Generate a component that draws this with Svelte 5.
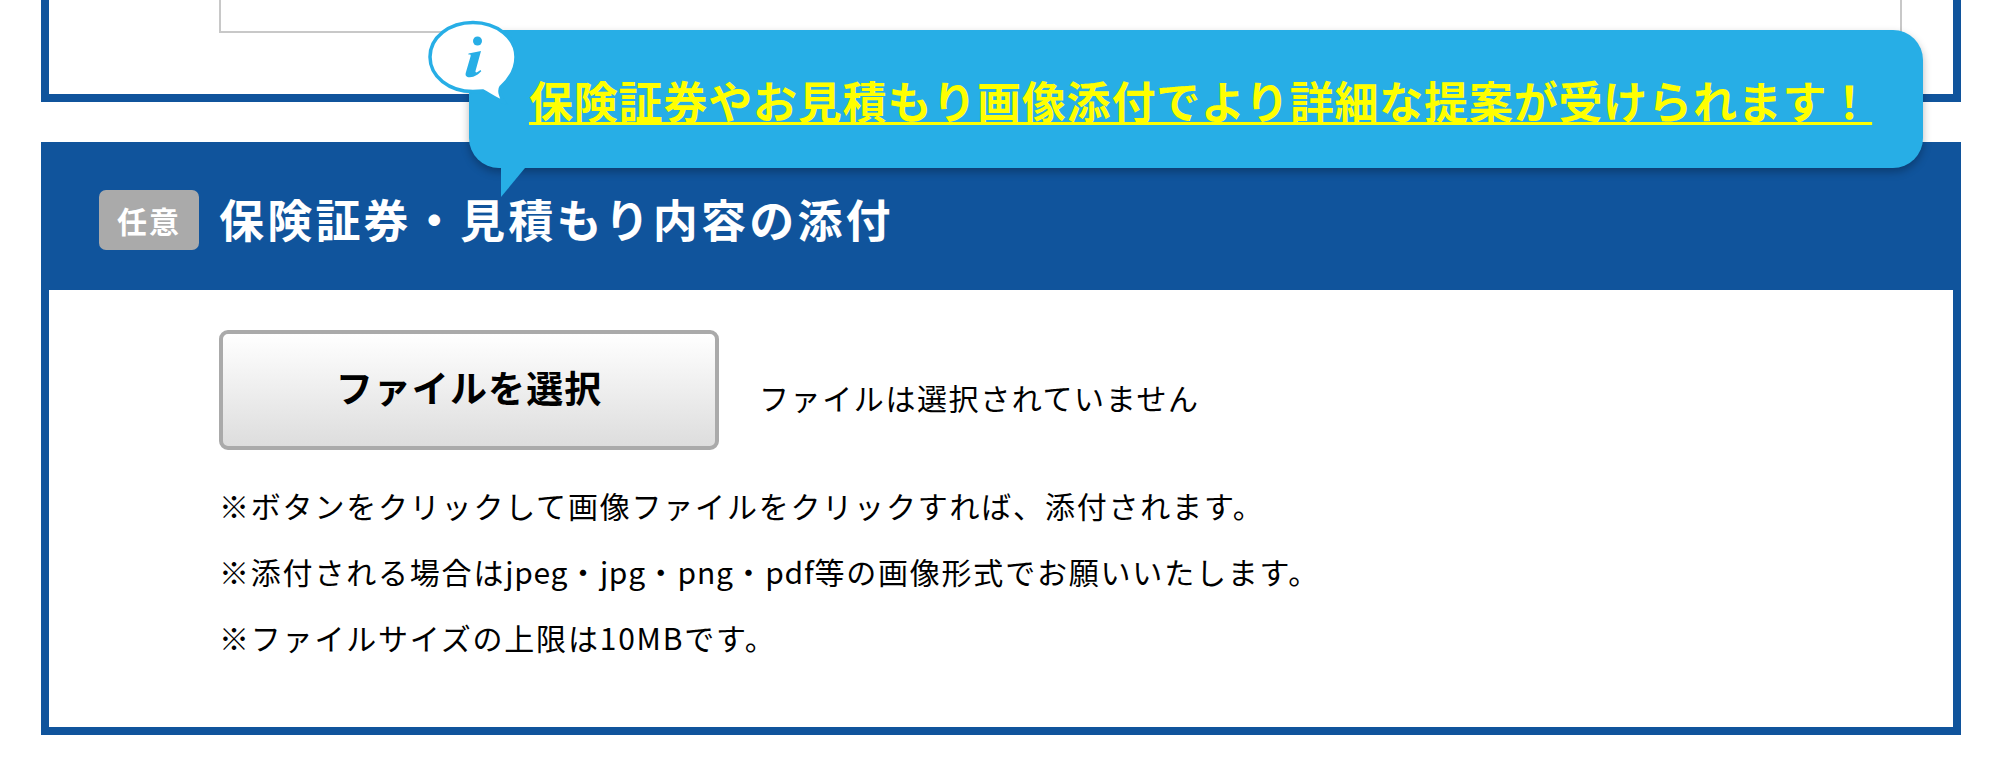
<script>
  const tail = '等の画像形式でお願いいたします。';
</script>

<div class="page">
  <section class="frame top">
    <div class="textbox"></div>
  </section>

  <section class="attach">
    <header class="head">
      <span class="badge">任意</span>
      <h2>保険証券・見積もり内容の添付</h2>
    </header>
    <div class="body">
      <div class="file">
        <button class="pick" type="button">ファイルを選択</button>
        <span class="status">ファイルは選択されていません</span>
      </div>
      <div class="notes">
        <p>※ボタンをクリックして画像ファイルをクリックすれば、添付されます。</p>
        <p>※添付される場合は<span class="latin">jpeg</span>・<span class="latin">jpg</span>・<span class="latin">png</span>・<span class="latin">pdf</span>{tail}</p>
        <p>※ファイルサイズの上限は10MBです。</p>
      </div>
    </div>
  </section>

  <aside class="bubble">
    <a href="#top">保険証券やお見積もり画像添付でより詳細な提案が受けられます！</a>
  </aside>
  <svg class="info" viewBox="425 16 96 90" width="96" height="90" aria-hidden="true">
    <path class="balloon" d="M473 22.500c24 0 43 15.500 43 34.500 0 12-6 22-15 30-2 3-1 9 3 15-7-2-15-8-21-11-3 .3-7 .5-10 .5-24 0-43-15-43-34.500s19-34.500 43-34.500z"/>
    <circle class="dot" cx="477.500" cy="41" r="4.500"/>
    <path class="dot" d="M468.500 53.500l12.500-2.500-5.500 20c-.3 1.500 .8 1.800 2 1l3-2 .8 1.200c-3 3-6.500 5.800-11.500 6-3.300 .1-4.800-1.500-4-4.500l4.800-16.500c.4-1.500-.5-1.800-2.100-1.500z"/>
  </svg>
</div>

<style>
  :global(body) {
    margin: 0;
    background: #fff;
  }
  .page {
    position: relative;
    width: 2014px;
    height: 764px;
    overflow: hidden;
    padding: 0 53px 0 41px;
    box-sizing: border-box;
    font-family: "Noto Sans CJK JP", "Noto Sans", sans-serif;
    color: #000;
  }
  .frame {
    border: 8px solid #10549c;
    border-top: 0;
    box-sizing: border-box;
    height: 102px;
    padding: 0 51px 0 170px;
  }
  .textbox {
    height: 33px;
    box-sizing: border-box;
    background: #fff;
    border: 2px solid #c8c8c8;
    border-top: 0;
  }
  .attach {
    margin-top: 40px;
    height: 593px;
    box-sizing: border-box;
    border: 8px solid #10549c;
    border-top: 0;
  }
  .head {
    height: 148px;
    margin: 0 -8px;
    box-sizing: border-box;
    background: #10549c;
    padding: 48px 0 0 58px;
    display: flex;
    align-items: flex-start;
    gap: 20px;
  }
  .badge {
    width: 100px;
    height: 60px;
    background: #aaa;
    border-radius: 7px;
    color: #fff;
    font-size: 30px;
    font-weight: 700;
    display: flex;
    align-items: center;
    justify-content: center;
    letter-spacing: 2px;
  }
  h2 {
    margin: 0;
    color: #fff;
    font-size: 45px;
    font-weight: 700;
    line-height: 58px;
    letter-spacing: 3.200px;
    white-space: nowrap;
  }
  .body {
    padding: 40px 0 0 170px;
  }
  .file {
    display: flex;
    align-items: flex-start;
  }
  .pick {
    width: 500px;
    height: 120px;
    box-sizing: border-box;
    border: 4px solid #aaa;
    border-radius: 9px;
    background: linear-gradient(#fff, #ddd);
    font-family: inherit;
    color: #000;
    font-size: 37px;
    font-weight: 700;
    letter-spacing: 1.100px;
    padding: 0 0 7px;
  }
  .status {
    margin: 45px 0 0 40px;
    font-size: 30px;
    line-height: 44px;
    letter-spacing: 1.600px;
    white-space: nowrap;
  }
  .notes {
    margin-top: 22px;
  }
  .notes p {
    margin: 0;
    font-size: 30px;
    line-height: 66px;
    letter-spacing: 1.800px;
    white-space: nowrap;
  }
  .latin {
    letter-spacing: 0.700px;
  }
  .bubble {
    position: absolute;
    left: 469px;
    top: 30px;
    width: 1454px;
    height: 138px;
    box-sizing: border-box;
    padding: 2px 0 0 60px;
    background: #27aee6;
    border-radius: 30px;
    box-shadow: 0 4px 8px rgba(0, 0, 0, 0.28);
    display: flex;
    align-items: center;
  }
  .bubble::after {
    content: "";
    position: absolute;
    left: 32px;
    top: 138px;
    width: 24px;
    height: 29px;
    background: #27aee6;
    clip-path: polygon(0 0, 100% 0, 0 100%);
  }
  .bubble a {
    color: #ff0;
    font-size: 44px;
    font-weight: 700;
    letter-spacing: 0.800px;
    line-height: 60px;
    white-space: nowrap;
    text-decoration: underline;
    text-decoration-thickness: 3px;
    text-underline-offset: 3px;
  }
  .info {
    position: absolute;
    left: 425px;
    top: 16px;
  }
  .balloon {
    fill: #fff;
    stroke: #27aee6;
    stroke-width: 3.500;
  }
  .dot {
    fill: #27aee6;
  }
</style>
